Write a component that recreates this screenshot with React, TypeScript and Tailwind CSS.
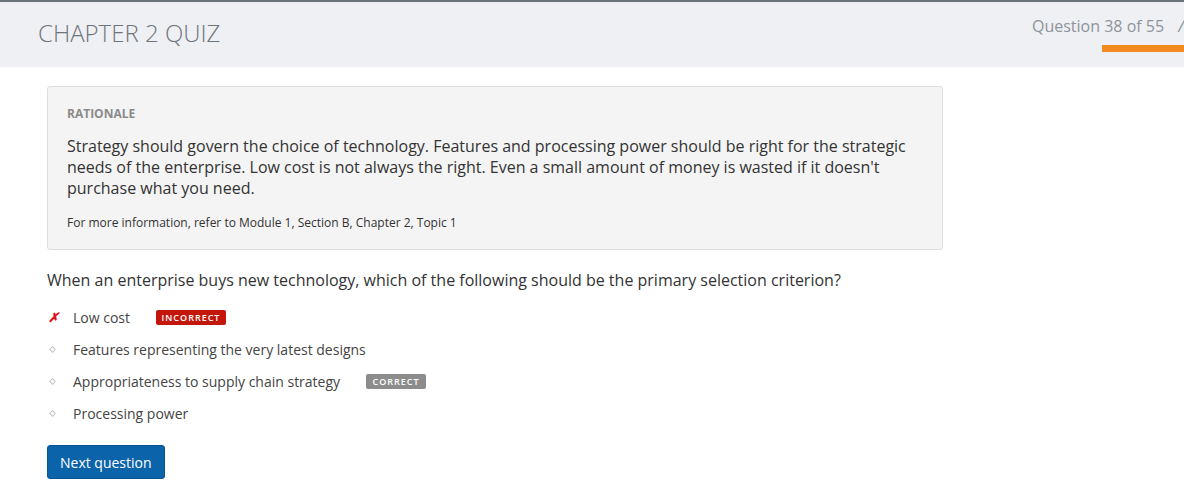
import React from 'react';

type Option = {
  id: string;
  label: string;
  picked?: boolean;
  badge?: 'incorrect' | 'correct';
};

const options: Option[] = [
  { id: 'a', label: 'Low cost', picked: true, badge: 'incorrect' },
  { id: 'b', label: 'Features representing the very latest designs' },
  { id: 'c', label: 'Appropriateness to supply chain strategy', badge: 'correct' },
  { id: 'd', label: 'Processing power' },
];

const Badge: React.FC<{ kind: 'incorrect' | 'correct' }> = ({ kind }) => (
  <span
    className={`ml-[26px] inline-flex items-center justify-center h-[15px] rounded-[2px] text-[9px] font-semibold tracking-[1px] text-white leading-none ${
      kind === 'incorrect' ? 'bg-[#c4170c] w-[70px]' : 'bg-[#8c8c8c] w-[60px]'
    }`}
  >
    {kind === 'incorrect' ? 'INCORRECT' : 'CORRECT'}
  </span>
);

const App: React.FC = () => {
  return (
    <div className="min-h-screen w-full overflow-hidden bg-white font-['Open_Sans',sans-serif] text-[#333]">
      {/* Header */}
      <header className="h-[67px] border-t-2 border-[#6a7177] bg-[#eff0f3] flex items-start">
        <h1 className="pl-[38px] pt-[15px] text-[24px] font-light text-[#6e747b] leading-[32px]">
          CHAPTER 2 QUIZ
        </h1>
        <div className="ml-auto mr-[-60px] w-[212px] shrink-0 flex flex-col pt-[13px]">
          <div className="flex items-center text-[16px] leading-[22px] text-[#8e949b] whitespace-nowrap">
            <span>Question 38 of 55</span>
            <span className="ml-[14px] italic">/</span>
          </div>
          <div className="ml-[70px] mt-[8px] h-[7px] bg-[#f28b1f]" />
        </div>
      </header>

      <main className="pl-[47px] pt-[19px]">
        {/* Rationale */}
        <section className="w-[896px] rounded-[3px] border border-[#dedede] bg-[#f4f4f4] pl-[19px] pr-[20px] pt-[19px] pb-[18px]">
          <h2 className="text-[12px] leading-[16px] font-bold text-[#8a8a8a]">RATIONALE</h2>
          <p className="mt-[14px] text-[16px] leading-[21px] text-[#333]">
            Strategy should govern the choice of technology. Features and processing power should be right for the strategic
            needs of the enterprise. Low cost is not always the right. Even a small amount of money is wasted if it doesn't
            purchase what you need.
          </p>
          <p className="mt-[16px] text-[12px] leading-[16px] text-[#333]">
            For more information, refer to Module 1, Section B, Chapter 2, Topic 1
          </p>
        </section>

        {/* Question */}
        <p className="mt-[19px] text-[16px] leading-[22px] text-[#333]">
          When an enterprise buys new technology, which of the following should be the primary selection criterion?
        </p>

        <ul className="mt-[10px] flex flex-col">
          {options.map((o) => (
            <li key={o.id} className="flex items-center h-[32px] text-[14px] text-[#444]">
              <span className="w-[26px] flex justify-start">
                {o.picked ? (
                  <span className="ml-[1px] text-[13px] font-bold italic text-[#e0101a] leading-none">✗</span>
                ) : (
                  <span className="ml-[3px] block w-[5px] h-[5px] rotate-45 border border-[#c8c8c8]" />
                )}
              </span>
              <span>{o.label}</span>
              {o.badge && <Badge kind={o.badge} />}
            </li>
          ))}
        </ul>

        <button className="mt-[16px] h-[34px] px-[12px] rounded-[3px] border border-[#08548f] bg-[#0b63a9] text-[14px] text-white">
          Next question
        </button>
      </main>
    </div>
  );
};

export default App;
